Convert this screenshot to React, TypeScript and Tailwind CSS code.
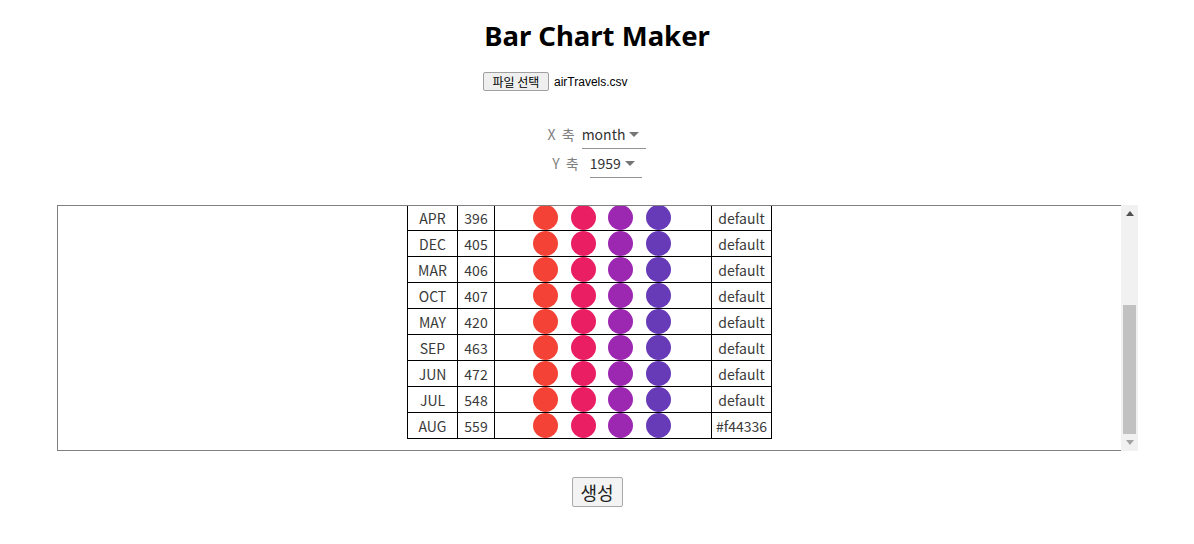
import React from 'react';

const rows: [string, number, string][] = [
  ["FEB", 342, "default"],
  ["JAN", 360, "default"],
  ["NOV", 362, "default"],
  ["APR", 396, "default"],
  ["DEC", 405, "default"],
  ["MAR", 406, "default"],
  ["OCT", 407, "default"],
  ["MAY", 420, "default"],
  ["SEP", 463, "default"],
  ["JUN", 472, "default"],
  ["JUL", 548, "default"],
  ["AUG", 559, "#f44336"],
];

const colors = ["#f44336", "#e91e63", "#9c27b0", "#673ab7"];

const Caret = () => (
  <svg width="24" height="24" viewBox="0 0 24 24" className="shrink-0 -ml-[3px]">
    <path d="M7 10l5 5 5-5z" fill="#757575" />
  </svg>
);

const AxisSelect = ({ label, value, gap }: { label: string; value: string; gap: string }) => (
  <div className={`flex items-center justify-center ${gap}`}>
    <span className="text-[14px] text-[#808080] [word-spacing:3px]">{label}</span>
    <div className="flex items-center h-[29px] border-b border-[#949494]">
      <span className="text-[14px] text-[#333]">{value}</span>
      <Caret />
    </div>
  </div>
);

export default function App() {
  return (
    <div className="w-full bg-white text-black" style={{ fontFamily: '"Noto Sans", "Noto Sans CJK KR", sans-serif' }}>
      <h1 className="text-center text-[27.5px] font-bold leading-[38px] pt-[17px]">Bar Chart Maker</h1>

      <div className="flex justify-center mt-[17px]">
        <div className="w-[228px] flex items-center h-[19px]">
          <button className="w-[66px] h-[19px] text-[12px] leading-none border border-[#a0a0a0] bg-[#efefef] rounded-[2px] text-black" style={{ fontFamily: '"Noto Sans CJK KR", sans-serif' }}>
            파일 선택
          </button>
          <span className="ml-[5px] text-[12px] text-black" style={{ fontFamily: '"Liberation Sans", Arial, sans-serif' }}>airTravels.csv</span>
        </div>
      </div>

      <div className="flex flex-col items-center mt-[29px]" style={{ fontFamily: '"Noto Sans CJK KR", sans-serif' }}>
        <AxisSelect label="X 축" value="month" gap="gap-[7px]" />
        <AxisSelect label="Y 축" value="1959" gap="gap-[11px]" />
      </div>

      <div className="ml-[57px] mr-[56px] mt-[27px] flex h-[246px]">
        <div className="flex-1 border-l border-t border-b border-[#808080] overflow-hidden flex flex-col justify-end pb-[11px]">
          <table className="mx-auto table-fixed border-collapse w-[364px] text-[14px] text-[#3a3a3a]" style={{ fontFamily: '"Noto Sans CJK KR", sans-serif' }}>
            <colgroup>
              <col className="w-[50px]" />
              <col className="w-[37px]" />
              <col className="w-[217px]" />
              <col className="w-[60px]" />
            </colgroup>
            <tbody>
              {rows.map(([m, v, c]) => (
                <tr key={m} className="h-[26px]">
                  <td className="border border-black p-0 pt-[1px] text-center leading-[24px]">{m}</td>
                  <td className="border border-black p-0 pt-[1px] text-center leading-[24px]">{v}</td>
                  <td className="border border-black p-0">
                    <div className="flex justify-center gap-[12.5px] pr-[2px]">
                      {colors.map((col) => (
                        <div key={col} className="w-[25px] h-[25px] rounded-full" style={{ backgroundColor: col }} />
                      ))}
                    </div>
                  </td>
                  <td className="border border-black p-0 pt-[1px] text-center leading-[24px]">{c}</td>
                </tr>
              ))}
            </tbody>
          </table>
        </div>
        <div className="w-[17px] bg-[#f1f1f1] flex flex-col">
          <div className="h-[17px] flex items-center justify-center">
            <svg width="8" height="5" viewBox="0 0 8 5"><path d="M0 5L4 0L8 5z" fill="#505050" /></svg>
          </div>
          <div className="flex-1 flex flex-col justify-end">
            <div className="h-[129px] mx-[2px] bg-[#c1c1c1]" />
          </div>
          <div className="h-[17px] flex items-center justify-center">
            <svg width="8" height="5" viewBox="0 0 8 5"><path d="M0 0L8 0L4 5z" fill="#a3a3a3" /></svg>
          </div>
        </div>
      </div>

      <div className="flex justify-center mt-[26px]">
        <button className="w-[51px] h-[30px] text-[18px] leading-none border border-[#a9a9a9] bg-[#f3f3f3] rounded-[2px] text-[#222]" style={{ fontFamily: '"Noto Sans CJK KR", sans-serif' }}>
          생성
        </button>
      </div>
    </div>
  );
}
